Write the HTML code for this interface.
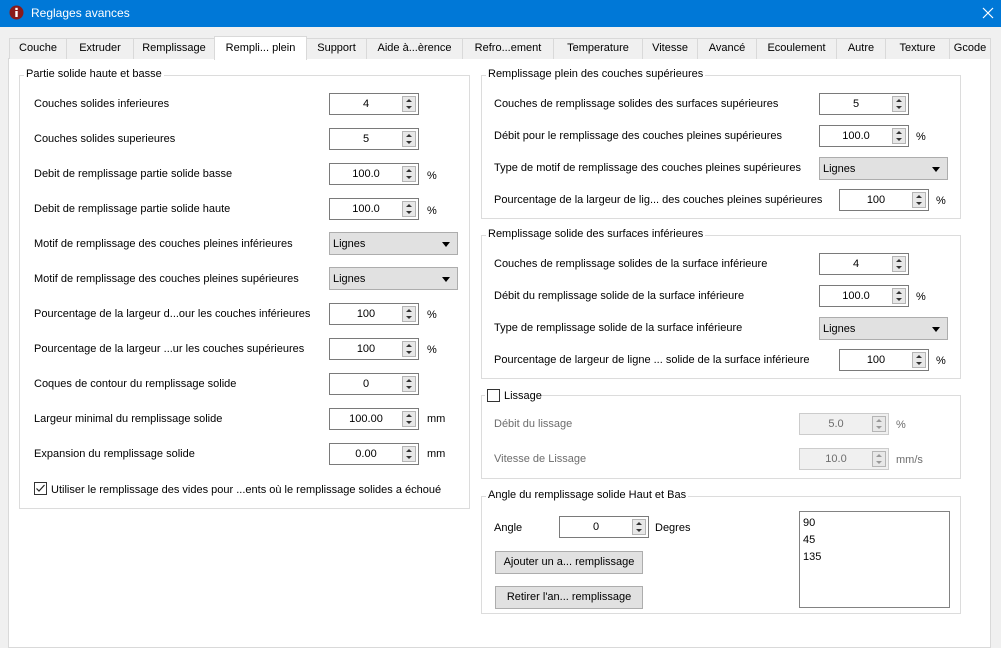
<!DOCTYPE html>
<html><head><meta charset="utf-8"><style>
*{box-sizing:border-box}
body{margin:0;width:1001px;height:635px;background:#f0f0f0;font-family:"Liberation Sans",sans-serif;font-size:11px;color:#000;position:relative;overflow:hidden}
.a{position:absolute;white-space:nowrap}
.title{position:absolute;left:0;top:0;width:1001px;height:27px;background:#0078d7;color:#fff}
.tab{position:absolute;top:38px;height:21px;border:1px solid #d9d9d9;border-bottom:none;background:#f0f0f0;text-align:center;line-height:19px;font-size:11px}
.tab.sel{top:36px;height:24px;background:#fff;z-index:2;line-height:22px}
.panel{position:absolute;left:8px;top:58px;width:983px;height:590px;background:#fff;border:1px solid #d9d9d9}
.grp{position:absolute;border:1px solid #dcdcdc}
.gl{position:absolute;background:#fff;padding:0 2px;top:-8px;left:4px;white-space:nowrap}
.l{position:absolute;white-space:nowrap;line-height:14px}
.sp{position:absolute;width:90px;height:22px;border:1px solid #7a7a7a;background:#fff}
.sp span{position:absolute;left:0;top:0;width:72px;text-align:center;line-height:21px}
.sp b{position:absolute;right:2px;top:2px;width:14px;height:16px;background:#e8e8e8;border:1px solid #b5b5b5}
.sp b:before{content:"";position:absolute;left:3px;top:2px;border:3px solid transparent;border-bottom:3px solid #333;border-top:none}
.sp b:after{content:"";position:absolute;left:3px;top:9px;border:3px solid transparent;border-top:3px solid #333;border-bottom:none}
.sp.d{background:#f0f0f0;border-color:#ccc;color:#6d6d6d}
.sp.d b:before{border-bottom-color:#999}.sp.d b:after{border-top-color:#999}
.cb{position:absolute;width:129px;height:23px;background:#e1e1e1;border:1px solid #adadad;line-height:22px;padding-left:3px}
.cb:after{content:"";position:absolute;right:7px;top:9px;border:4px solid transparent;border-top:5px solid #000;border-bottom:none}
.btn{position:absolute;width:148px;height:23px;background:#e1e1e1;border:1px solid #adadad;text-align:center;line-height:21px}
.dis{color:#6d6d6d}
</style></head><body>
<div class="title">
<svg class="a" style="left:9px;top:5px" width="15" height="15"><circle cx="7.5" cy="7.5" r="7" fill="#8b1a1a"/><rect x="6.3" y="6" width="2.4" height="6" fill="#fff"/><rect x="6.3" y="2.8" width="2.4" height="2.2" fill="#fff"/></svg>
<div class="a" style="left:31px;top:6px;font-size:12px">Reglages avances</div>
<svg class="a" style="left:982px;top:7px" width="12" height="12"><path d="M1 1L11 11M11 1L1 11" stroke="#fff" stroke-width="1.2"/></svg>
</div>
<div class="panel"></div>
<div class="tab" style="left:9px;width:58px">Couche</div>
<div class="tab" style="left:66px;width:68px">Extruder</div>
<div class="tab" style="left:133px;width:82px">Remplissage</div>
<div class="tab sel" style="left:214px;width:93px">Rempli... plein</div>
<div class="tab" style="left:306px;width:61px">Support</div>
<div class="tab" style="left:366px;width:97px">Aide à...èrence</div>
<div class="tab" style="left:462px;width:92px">Refro...ement</div>
<div class="tab" style="left:553px;width:90px">Temperature</div>
<div class="tab" style="left:642px;width:56px">Vitesse</div>
<div class="tab" style="left:697px;width:60px">Avancé</div>
<div class="tab" style="left:756px;width:81px">Ecoulement</div>
<div class="tab" style="left:836px;width:50px">Autre</div>
<div class="tab" style="left:885px;width:65px">Texture</div>
<div class="tab" style="left:949px;width:42px">Gcode</div>

<div class="grp" style="left:19px;top:75px;width:451px;height:434px"><div class="gl">Partie solide haute et basse</div></div>
<div class="l" style="left:34px;top:97px">Couches solides inferieures</div>
<div class="sp" style="left:329px;top:93px"><span>4</span><b></b></div>
<div class="l" style="left:34px;top:132px">Couches solides superieures</div>
<div class="sp" style="left:329px;top:128px"><span>5</span><b></b></div>
<div class="l" style="left:34px;top:167px">Debit de remplissage partie solide basse</div>
<div class="sp" style="left:329px;top:163px"><span>100.0</span><b></b></div><div class="l" style="left:427px;top:169px">%</div>
<div class="l" style="left:34px;top:202px">Debit de remplissage partie solide haute</div>
<div class="sp" style="left:329px;top:198px"><span>100.0</span><b></b></div><div class="l" style="left:427px;top:204px">%</div>
<div class="l" style="left:34px;top:237px">Motif de remplissage des couches pleines inférieures</div>
<div class="cb" style="left:329px;top:232px">Lignes</div>
<div class="l" style="left:34px;top:272px">Motif de remplissage des couches pleines supérieures</div>
<div class="cb" style="left:329px;top:267px">Lignes</div>
<div class="l" style="left:34px;top:307px">Pourcentage de la largeur d...our les couches inférieures</div>
<div class="sp" style="left:329px;top:303px"><span>100</span><b></b></div><div class="l" style="left:427px;top:308px">%</div>
<div class="l" style="left:34px;top:342px">Pourcentage de la largeur ...ur les couches supérieures</div>
<div class="sp" style="left:329px;top:338px"><span>100</span><b></b></div><div class="l" style="left:427px;top:343px">%</div>
<div class="l" style="left:34px;top:377px">Coques de contour du remplissage solide</div>
<div class="sp" style="left:329px;top:373px"><span>0</span><b></b></div>
<div class="l" style="left:34px;top:412px">Largeur minimal du remplissage solide</div>
<div class="sp" style="left:329px;top:408px"><span>100.00</span><b></b></div><div class="l" style="left:427px;top:412px">mm</div>
<div class="l" style="left:34px;top:447px">Expansion du remplissage solide</div>
<div class="sp" style="left:329px;top:443px"><span>0.00</span><b></b></div><div class="l" style="left:427px;top:447px">mm</div>
<svg class="a" style="left:34px;top:482px" width="13" height="13"><rect x="0.5" y="0.5" width="12" height="12" fill="#fff" stroke="#333"/><path d="M2.5 6.5L5 9L10.5 3" stroke="#222" fill="none" stroke-width="1.2"/></svg>
<div class="l" style="left:51px;top:483px">Utiliser le remplissage des vides pour ...ents où le remplissage solides a échoué</div>

<div class="grp" style="left:481px;top:75px;width:480px;height:144px"><div class="gl">Remplissage plein des couches supérieures</div></div>
<div class="l" style="left:494px;top:97px">Couches de remplissage solides des surfaces supérieures</div>
<div class="sp" style="left:819px;top:93px"><span>5</span><b></b></div>
<div class="l" style="left:494px;top:129px">Débit pour le remplissage des couches pleines supérieures</div>
<div class="sp" style="left:819px;top:125px"><span>100.0</span><b></b></div><div class="l" style="left:916px;top:130px">%</div>
<div class="l" style="left:494px;top:161px">Type de motif de remplissage des couches pleines supérieures</div>
<div class="cb" style="left:819px;top:157px">Lignes</div>
<div class="l" style="left:494px;top:193px">Pourcentage de la largeur de lig... des couches pleines supérieures</div>
<div class="sp" style="left:839px;top:189px"><span>100</span><b></b></div><div class="l" style="left:936px;top:194px">%</div>

<div class="grp" style="left:481px;top:235px;width:480px;height:144px"><div class="gl">Remplissage solide des surfaces inférieures</div></div>
<div class="l" style="left:494px;top:257px">Couches de remplissage solides de la surface inférieure</div>
<div class="sp" style="left:819px;top:253px"><span>4</span><b></b></div>
<div class="l" style="left:494px;top:289px">Débit du remplissage solide de la surface inférieure</div>
<div class="sp" style="left:819px;top:285px"><span>100.0</span><b></b></div><div class="l" style="left:916px;top:290px">%</div>
<div class="l" style="left:494px;top:321px">Type de remplissage solide de la surface inférieure</div>
<div class="cb" style="left:819px;top:317px">Lignes</div>
<div class="l" style="left:494px;top:353px">Pourcentage de largeur de ligne ... solide de la surface inférieure</div>
<div class="sp" style="left:839px;top:349px"><span>100</span><b></b></div><div class="l" style="left:936px;top:354px">%</div>

<div class="grp" style="left:481px;top:395px;width:480px;height:84px"></div>
<div class="a" style="left:485px;top:388px;width:56px;height:16px;background:#fff"></div>
<svg class="a" style="left:487px;top:389px" width="13" height="13"><rect x="0.5" y="0.5" width="12" height="12" fill="#fff" stroke="#333"/></svg>
<div class="l" style="left:504px;top:389px">Lissage</div>
<div class="l dis" style="left:494px;top:417px">Débit du lissage</div>
<div class="sp d" style="left:799px;top:413px"><span>5.0</span><b></b></div><div class="l dis" style="left:896px;top:418px">%</div>
<div class="l dis" style="left:494px;top:452px">Vitesse de Lissage</div>
<div class="sp d" style="left:799px;top:448px"><span>10.0</span><b></b></div><div class="l dis" style="left:896px;top:453px">mm/s</div>

<div class="grp" style="left:481px;top:496px;width:480px;height:118px"><div class="gl">Angle du remplissage solide Haut et Bas</div></div>
<div class="l" style="left:494px;top:521px">Angle</div>
<div class="sp" style="left:559px;top:516px"><span>0</span><b></b></div>
<div class="l" style="left:655px;top:521px">Degres</div>
<div class="btn" style="left:495px;top:551px">Ajouter un a... remplissage</div>
<div class="btn" style="left:495px;top:586px">Retirer l'an... remplissage</div>
<div class="a" style="left:799px;top:511px;width:151px;height:97px;border:1px solid #828282;background:#fff;padding:3px 0 0 3px;line-height:17px">90<br>45<br>135</div>
</body></html>
